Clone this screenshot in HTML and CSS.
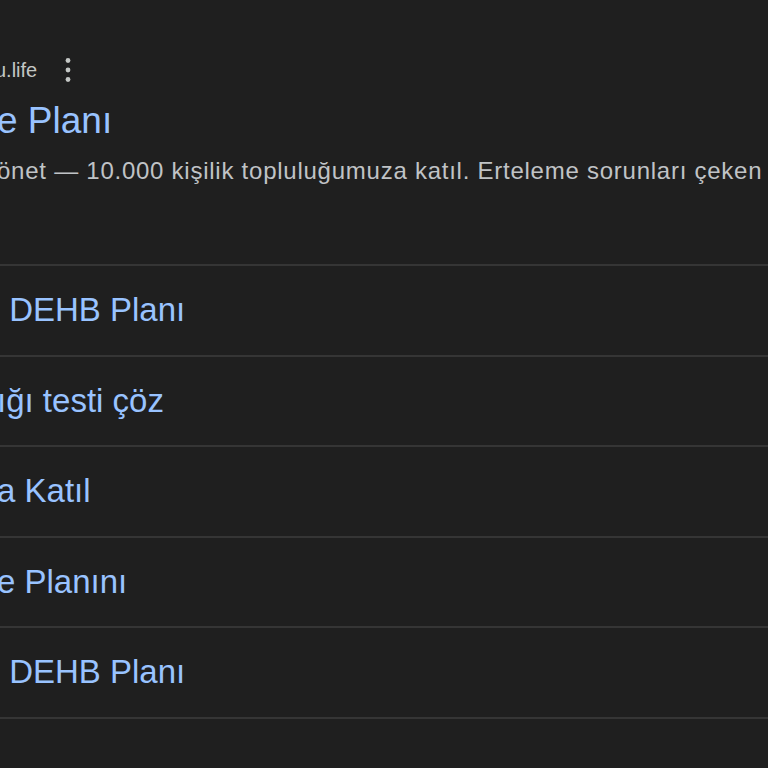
FILE: index.html
```html
<!DOCTYPE html>
<html lang="tr">
<head>
    <meta charset="UTF-8">
    <meta name="viewport" content="width=device-width, initial-scale=1.0">
    <title>Arama sonucu</title>
    <link rel="stylesheet" href="styles.css">
</head>
<body>
    <div class="result">
        <div class="site">
            <span class="url"><span class="cut">https://foc</span>u.life</span>
            <span class="more">
                <svg width="6" height="26" viewBox="0 0 6 26">
                    <circle cx="3" cy="3.5" r="2.4" fill="#c4c7c5"/>
                    <circle cx="3" cy="13" r="2.4" fill="#c4c7c5"/>
                    <circle cx="3" cy="22.5" r="2.4" fill="#c4c7c5"/>
                </svg>
            </span>
        </div>
        <h3 class="title"><span class="cut">DEHB ve Erteleme Plan</span>e Planı</h3>
        <p class="snippet"><span class="cut">Dikkatini topla ve zamanını y</span>önet — 10.000 kişilik topluluğumuza katıl. Erteleme sorunları çeken</p>

        <!-- Sitelinks -->
        <ul class="sitelinks">
            <li><a href="#"><span class="cut wide">Kişisel</span> DEHB Planı</a></li>
            <li><a href="#"><span class="cut">Dikkat dağınıkl</span>ığı testi çöz</a></li>
            <li><a href="#"><span class="cut">Topluluğ</span>a Katıl</a></li>
            <li><a href="#"><span class="cut">Ertelem</span>e Planını</a></li>
            <li><a href="#"><span class="cut wide">Ücretsiz</span> DEHB Planı</a></li>
        </ul>
    </div>
</body>
</html>
```

FILE: styles.css
```css
body {
    margin: 0;
    padding: 0;
    background: #1f1f1f;
    font-family: "Liberation Sans", Arial, sans-serif;
    color: #bdc1c6;
    overflow: hidden;
}

.result {
    padding-top: 56px;
    margin-left: -3px;
}

/* the left part of each line lies outside the window */
.cut {
    display: inline-block;
    width: 400px;
    margin-left: -400px;
    text-align: right;
    white-space: pre;
    visibility: hidden;
}

.cut.wide {
    margin-right: 3px;
}

.site {
    display: flex;
    align-items: center;
    height: 28px;
    gap: 28px;
}

.url {
    font-size: 20px;
    line-height: 28px;
    color: #c4c7c5;
    white-space: nowrap;
    margin-left: -2px;
}

.more {
    display: flex;
    align-items: center;
}

.title {
    margin: 15px 0 0;
    font-size: 37px;
    line-height: 44px;
    font-weight: normal;
    color: #99c3ff;
    white-space: nowrap;
}

.snippet {
    margin: 12px 0 0;
    font-size: 24px;
    line-height: 32px;
    letter-spacing: 0.75px;
    color: #c0c3c6;
    white-space: nowrap;
}

.sitelinks {
    list-style: none;
    margin: 77px 0 0;
    padding: 0;
}

.sitelinks li {
    display: flex;
    align-items: center;
    height: 88.5px;
    border-top: 2px solid #353535;
}

.sitelinks li:last-child {
    border-bottom: 2px solid #353535;
}

.sitelinks a {
    font-size: 33px;
    line-height: 40px;
    color: #99c3ff;
    text-decoration: none;
    white-space: nowrap;
}
```
